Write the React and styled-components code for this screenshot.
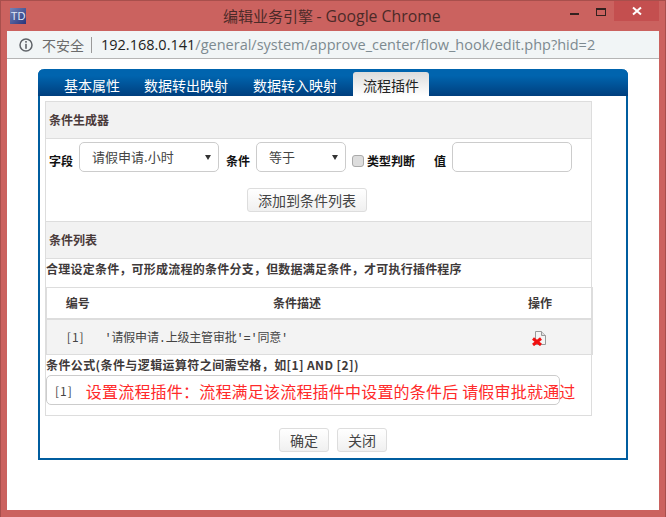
import React from 'react'
import styled, {createGlobalStyle} from 'styled-components'

const Global = createGlobalStyle`
    html, body{
        margin: 0;
        padding: 0;
        background: #fff;
    }
    *{
        box-sizing: border-box;
    }
`

const cjk = `"Noto Sans CJK SC", "Liberation Sans", sans-serif`

export default function App() {
    return (
        <Win>
            <Global />
            <TitleBar>
                <Logo>TD</Logo>
                <Title>编辑业务引擎 <span>- Google Chrome</span></Title>
                <Controls>
                    <Minimize />
                    <Maximize />
                    <Close>
                        <svg width="10" height="10" viewBox="0 0 10 10">
                            <path d="M1 1.5L9 8.5M9 1.5L1 8.5" stroke="#fff" strokeWidth="2" />
                        </svg>
                    </Close>
                </Controls>
            </TitleBar>
            <AddressBar>
                <svg width="14" height="14" viewBox="0 0 14 14">
                    <circle cx="7" cy="7" r="6" fill="none" stroke="#5f6368" strokeWidth="1.5" />
                    <rect x="6.2" y="3" width="1.6" height="1.7" fill="#5f6368" />
                    <rect x="6.2" y="5.8" width="1.6" height="5" fill="#5f6368" />
                </svg>
                <Insecure>不安全</Insecure>
                <Divider />
                <Url><b>192.168.0.141</b>/general/system/approve_center/flow_hook/edit.php?hid=2</Url>
            </AddressBar>
            <Content>
                <Panel>
                    <Tabs>
                        <Tab>基本属性</Tab>
                        <Tab>数据转出映射</Tab>
                        <Tab>数据转入映射</Tab>
                        <Tab $active>流程插件</Tab>
                    </Tabs>
                    <PanelBody>
                        <Section>
                            <SectionTitle>条件生成器</SectionTitle>
                            <FormArea>
                                <FieldRow>
                                    <FieldLabel>字段</FieldLabel>
                                    <Select $width={140}>请假申请.小时</Select>
                                    <FieldLabel $left={7}>条件</FieldLabel>
                                    <Select $width={90}>等于</Select>
                                    <Check type="checkbox" />
                                    <FieldLabel $left={3}>类型判断</FieldLabel>
                                    <FieldLabel $left={13}>值</FieldLabel>
                                    <ValueInput />
                                </FieldRow>
                                <AddRow>
                                    <Button $width={120}>添加到条件列表</Button>
                                </AddRow>
                            </FormArea>
                            <SectionTitle>条件列表</SectionTitle>
                            <Hint>合理设定条件，可形成流程的条件分支，但数据满足条件，才可执行插件程序</Hint>
                            <Table>
                                <colgroup>
                                    <col width="58" />
                                    <col width="385" />
                                    <col width="102" />
                                </colgroup>
                                <thead>
                                    <tr>
                                        <Th>编号</Th>
                                        <Th>条件描述</Th>
                                        <Th>操作</Th>
                                    </tr>
                                </thead>
                                <tbody>
                                    <tr>
                                        <Td $spaced>[1]</Td>
                                        <Td $left>'请假申请.上级主管审批'='同意'</Td>
                                        <Td>
                                            <svg width="16" height="16" viewBox="0 0 16 16">
                                                <path d="M3.5 1.5H9.5L13.5 5.5V14.5H3.5Z" fill="#f4f4f4" stroke="#999" />
                                                <path d="M9.5 1.5V5.5H13.5" fill="#ddd" stroke="#999" />
                                                <path d="M1 8.5L9 15M9 8.5L1 15" stroke="#f01010" strokeWidth="3" />
                                            </svg>
                                        </Td>
                                    </tr>
                                </tbody>
                            </Table>
                            <FormulaLabel>条件公式(条件与逻辑运算符之间需空格，如[1] AND [2])</FormulaLabel>
                            <FormulaBox>
                                <Tag>[1]</Tag>
                                <Note>设置流程插件：流程满足该流程插件中设置的条件后 请假审批就通过</Note>
                            </FormulaBox>
                        </Section>
                        <Footer>
                            <Button $width={50}>确定</Button>
                            <Button $width={50}>关闭</Button>
                        </Footer>
                    </PanelBody>
                </Panel>
            </Content>
        </Win>
    )
}

const Win = styled.div`
    width: 666px;
    height: 517px;
    display: flex;
    flex-direction: column;
    overflow: hidden;
    background-color: #cb625f;
    border: 1px solid #a84f4c;
    border-bottom: none;
    padding: 0 6px 7px 6px;
    font-family: ${cjk};
`

const TitleBar = styled.div`
    height: 30px;
    flex: none;
    display: flex;
    align-items: flex-start;
    position: relative;
`

const Logo = styled.div`
    width: 16px;
    height: 16px;
    margin: 7px 0 0 3px;
    background: linear-gradient(135deg, #7484b8, #27347a);
    color: #dfe6f5;
    font: 11px/16px "Liberation Sans", sans-serif;
    text-align: center;
`

const Title = styled.div`
    position: absolute;
    left: 216px;
    top: 5px;
    font-size: 15px;
    line-height: 20px;
    color: #4b2a28;
    white-space: nowrap;

    span{
        font-family: "Open Sans", sans-serif;
        font-size: 15.8px;
    }
`

const Controls = styled.div`
    margin-left: auto;
    display: flex;
    align-items: flex-start;
`

const Minimize = styled.div`
    width: 9px;
    height: 2px;
    margin: 12px 17px 0 0;
    background: #33211f;
`

const Maximize = styled.div`
    width: 10px;
    height: 8px;
    margin: 7px 8px 0 0;
    border: 1px solid #33211f;
    border-top-width: 2px;
`

const Close = styled.div`
    width: 45px;
    height: 20px;
    background: #c44f4f;
    display: flex;
    align-items: center;
    justify-content: center;
`

const AddressBar = styled.div`
    height: 28px;
    flex: none;
    display: flex;
    align-items: center;
    padding-left: 12px;
    background: #f1f5f6;
    border-bottom: 1px solid #b5b5b5;
`

const Insecure = styled.span`
    margin-left: 9px;
    font-size: 14px;
    color: #6b6b6b;
`

const Divider = styled.span`
    width: 1px;
    height: 16px;
    margin: 0 9px 0 7px;
    background: #9a9a9a;
`

const Url = styled.span`
    font-family: "Open Sans", sans-serif;
    font-size: 14.5px;
    color: #7d8a90;
    white-space: nowrap;

    b{
        font-weight: 400;
        color: #222;
    }
`

const Content = styled.div`
    flex: 1;
    background: #fff;
    padding: 10px 0 0 31px;
`

const Panel = styled.div`
    width: 590px;
    height: 391px;
    display: flex;
    flex-direction: column;
    border-radius: 6px 6px 0 0;
    background: #fff;
    border: 2px solid #005d9f;
    border-top: none;
`

const Tabs = styled.div`
    height: 27px;
    flex: none;
    display: flex;
    align-items: flex-end;
    gap: 5px;
    padding-left: 16px;
    margin: 0 -2px;
    border-radius: 6px 6px 0 0;
    background: linear-gradient(#0064ae 25%, #003f7e);
`

const Tab = styled.div`
    height: 24px;
    padding: 0 10px;
    font-size: 14px;
    line-height: 27px;
    color: ${p => p.$active ? '#222' : '#fff'};
    border-radius: 3px 3px 0 0;
    background: ${p => p.$active ? 'linear-gradient(#dcdcdc, #fff)' : 'none'};
    margin-left: ${p => p.$active ? '1px' : '0'};

    &:first-child{
        margin-right: -1px;
    }
`

const PanelBody = styled.div`
    flex: 1;
    padding: 5px 0 0 5px;
`

const Section = styled.div`
    width: 547px;
    height: 315px;
    border: 1px solid #ddd;
`

const SectionTitle = styled.div`
    height: 37px;
    padding-left: 3px;
    background: #f2f2f2;
    border-bottom: 1px solid #ddd;
    font-size: 12px;
    font-weight: 700;
    line-height: 36px;
    color: #4a3a3a;
`

const FormArea = styled.div`
    height: 83px;
    padding-top: 3px;
    border-bottom: 1px solid #ddd;
`

const FieldRow = styled.div`
    display: flex;
    align-items: center;
    height: 30px;
    padding-left: 3px;
`

const FieldLabel = styled.span`
    font-size: 12px;
    font-weight: 700;
    color: #111;
    margin: 6px 6px 0 ${p => p.$left || 0}px;
    white-space: nowrap;
`

const Select = styled.div`
    width: ${p => p.$width}px;
    height: 30px;
    flex: none;
    position: relative;
    padding-left: 12px;
    border: 1px solid #ccc;
    border-radius: 5px;
    font-size: 13px;
    line-height: 27px;
    color: #444;

    &::after{
        content: '';
        position: absolute;
        right: 7px;
        top: 12px;
        border: 3px solid transparent;
        border-width: 5px 3px 0;
        border-top-color: #333;
    }
`

const Check = styled.input`
    appearance: none;
    width: 12px;
    height: 12px;
    flex: none;
    margin: 7px 0 0 6px;
    background: #ddd;
    border: 1px solid #aaa;
    border-radius: 3px;
`

const ValueInput = styled.input`
    width: 120px;
    height: 30px;
    flex: none;
    border: 1px solid #ccc;
    border-radius: 5px;
    outline: none;
    background: #fff;
`

const AddRow = styled.div`
    display: flex;
    justify-content: center;
    margin-top: 16px;
    padding-right: 23px;
`

const Button = styled.button`
    width: ${p => p.$width}px;
    height: 24px;
    padding: 0;
    border: 1px solid #ddd;
    border-radius: 3px;
    background: linear-gradient(#fff, #f0f0f0);
    font-family: inherit;
    font-size: 14px;
    line-height: 22px;
    color: #444;
`

const Hint = styled.div`
    height: 28px;
    font-size: 12px;
    font-weight: 700;
    line-height: 20px;
    letter-spacing: .23px;
    color: #3f3a3a;
    white-space: nowrap;
`

const Table = styled.table`
    width: 544px;
    table-layout: fixed;
    border-collapse: collapse;
    border: 1px solid #ddd;
    border-right-width: 2px;
`

const Th = styled.th`
    height: 31px;
    padding: 0;
    font-size: 12px;
    font-weight: 700;
    color: #3f3a3a;
    border-bottom: 2px solid #ddd;

    &:first-child{
        padding-left: 4px;
    }
`

const Td = styled.td`
    height: 36px;
    padding: 0;
    background: #f3f3f3;
    font-family: ${p => p.$left ? `"Liberation Mono", ${cjk}` : 'inherit'};
    font-size: 12px;
    letter-spacing: ${p => p.$spaced ? '1px' : p.$left ? '-.2px' : '0'};
    color: #444;
    text-align: ${p => p.$left ? 'left' : 'center'};

    svg{
        display: block;
        margin: 2px 0 0 42px;
    }
`

const FormulaLabel = styled.div`
    height: 20px;
    font-size: 12px;
    font-weight: 700;
    line-height: 20px;
    letter-spacing: .4px;
    color: #3f3a3a;
    white-space: nowrap;
`

const FormulaBox = styled.div`
    width: 514px;
    height: 30px;
    display: flex;
    align-items: center;
    padding-left: 8px;
    border: 1px solid #ccc;
    border-radius: 5px;
    font-size: 12px;
    color: #444;
    white-space: nowrap;
`

const Tag = styled.span`
    letter-spacing: 1px;
`

const Note = styled.span`
    margin-left: 13px;
    margin-top: 2px;
    font-size: 16px;
    letter-spacing: .2px;
    color: #ff2a2a;
`

const Footer = styled.div`
    display: flex;
    justify-content: center;
    gap: 8px;
    margin-top: 12px;
    padding-right: 5px;
`
